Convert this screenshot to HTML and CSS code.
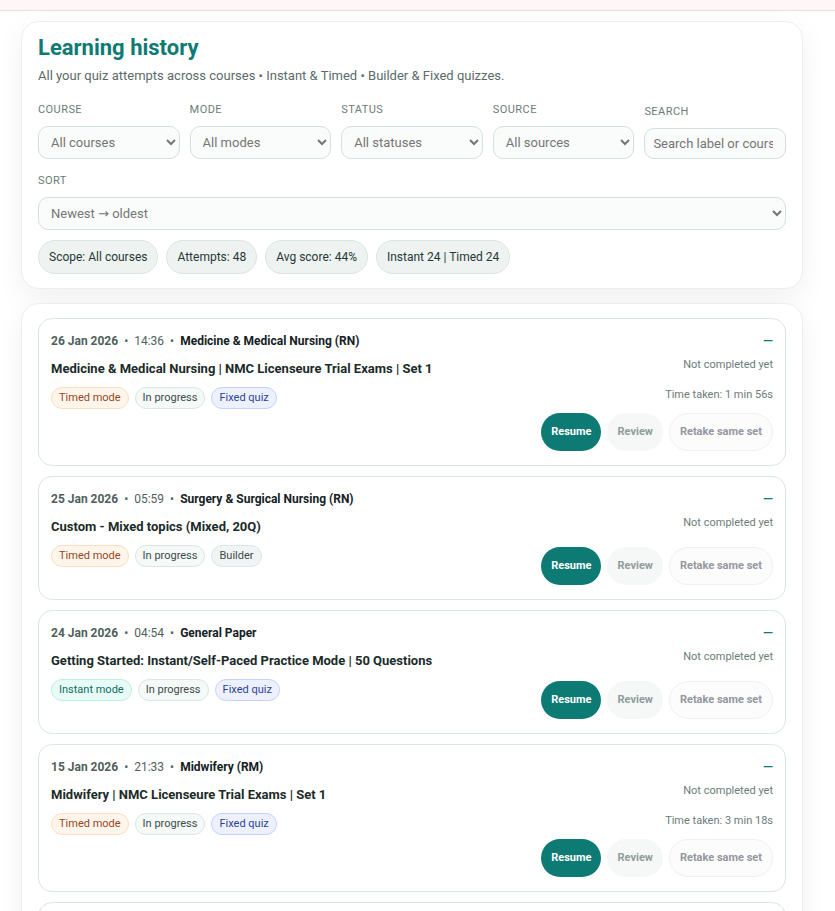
FILE: index.html
```
<!DOCTYPE html>
<html lang="en">
<head>
    <meta charset="UTF-8">
    <meta name="viewport" content="width=device-width, initial-scale=1.0">
    <title>Learning history</title>
    <link rel="stylesheet" href="styles.css">
</head>
<body>
    <div class="notice"></div>
    <main class="page">
        <section class="card">
            <h1>Learning history</h1>
            <p class="subtitle">All your quiz attempts across courses • Instant &amp; Timed • Builder &amp; Fixed quizzes.</p>
            <form class="filters">
                <div class="field">
                    <label for="course">Course</label>
                    <select id="course"><option>All courses</option></select>
                </div>
                <div class="field">
                    <label for="mode">Mode</label>
                    <select id="mode"><option>All modes</option></select>
                </div>
                <div class="field">
                    <label for="status">Status</label>
                    <select id="status"><option>All statuses</option></select>
                </div>
                <div class="field">
                    <label for="source">Source</label>
                    <select id="source"><option>All sources</option></select>
                </div>
                <div class="field">
                    <label for="search">Search</label>
                    <input type="text" id="search" placeholder="Search label or course">
                </div>
                <div class="field wide">
                    <label for="sort">Sort</label>
                    <select id="sort"><option>Newest → oldest</option></select>
                </div>
            </form>
            <div class="chips">
                <span class="chip">Scope: All courses</span>
                <span class="chip">Attempts: 48</span>
                <span class="chip">Avg score: 44%</span>
                <span class="chip">Instant 24 | Timed 24</span>
            </div>
        </section>

        <section class="card list">
            <article class="attempt">
                <div class="info">
                    <div class="meta"><strong>26 Jan 2026</strong><span>•</span><span>14:36</span><span>•</span><b>Medicine &amp; Medical Nursing (RN)</b></div>
                    <h2>Medicine &amp; Medical Nursing | NMC Licenseure Trial Exams | Set 1</h2>
                    <div class="tags"><span class="tag timed">Timed mode</span><span class="tag">In progress</span><span class="tag fixed">Fixed quiz</span></div>
                </div>
                <div class="result">
                    <div class="score">—</div>
                    <div class="note">Not completed yet</div>
                    <div class="time">Time taken: 1 min 56s</div>
                    <div class="actions">
                        <button type="button" class="btn resume">Resume</button>
                        <button type="button" class="btn review" disabled>Review</button>
                        <button type="button" class="btn retake" disabled>Retake same set</button>
                    </div>
                </div>
            </article>

            <article class="attempt">
                <div class="info">
                    <div class="meta"><strong>25 Jan 2026</strong><span>•</span><span>05:59</span><span>•</span><b>Surgery &amp; Surgical Nursing (RN)</b></div>
                    <h2>Custom - Mixed topics (Mixed, 20Q)</h2>
                    <div class="tags"><span class="tag timed">Timed mode</span><span class="tag">In progress</span><span class="tag builder">Builder</span></div>
                </div>
                <div class="result">
                    <div class="score">—</div>
                    <div class="note">Not completed yet</div>
                    <div class="actions">
                        <button type="button" class="btn resume">Resume</button>
                        <button type="button" class="btn review" disabled>Review</button>
                        <button type="button" class="btn retake" disabled>Retake same set</button>
                    </div>
                </div>
            </article>

            <article class="attempt">
                <div class="info">
                    <div class="meta"><strong>24 Jan 2026</strong><span>•</span><span>04:54</span><span>•</span><b>General Paper</b></div>
                    <h2>Getting Started: Instant/Self-Paced Practice Mode | 50 Questions</h2>
                    <div class="tags"><span class="tag instant">Instant mode</span><span class="tag">In progress</span><span class="tag fixed">Fixed quiz</span></div>
                </div>
                <div class="result">
                    <div class="score">—</div>
                    <div class="note">Not completed yet</div>
                    <div class="actions">
                        <button type="button" class="btn resume">Resume</button>
                        <button type="button" class="btn review" disabled>Review</button>
                        <button type="button" class="btn retake" disabled>Retake same set</button>
                    </div>
                </div>
            </article>

            <article class="attempt">
                <div class="info">
                    <div class="meta"><strong>15 Jan 2026</strong><span>•</span><span>21:33</span><span>•</span><b>Midwifery (RM)</b></div>
                    <h2>Midwifery | NMC Licenseure Trial Exams | Set 1</h2>
                    <div class="tags"><span class="tag timed">Timed mode</span><span class="tag">In progress</span><span class="tag fixed">Fixed quiz</span></div>
                </div>
                <div class="result">
                    <div class="score">—</div>
                    <div class="note">Not completed yet</div>
                    <div class="time">Time taken: 3 min 18s</div>
                    <div class="actions">
                        <button type="button" class="btn resume">Resume</button>
                        <button type="button" class="btn review" disabled>Review</button>
                        <button type="button" class="btn retake" disabled>Retake same set</button>
                    </div>
                </div>
            </article>

            <article class="attempt"></article>
        </section>
    </main>
</body>
</html>
```
FILE: styles.css
```
* {
    box-sizing: border-box;
}
body {
    margin: 0;
    background-color: white;
    color: #263836;
    font-family: Roboto, "Noto Sans", "DejaVu Sans", sans-serif;
    font-size: 13px;
}
.notice {
    height: 11px;
    background-color: #fff7f7;
    border-bottom: 1px solid #f3dcdf;
}
.page {
    display: grid;
    gap: 14px;
    padding: 10px 32px 0 21px;
}
.card {
    padding: 14px 16px;
    background-color: white;
    border: 1px solid #eeeeee;
    border-radius: 18px;
    box-shadow: 0 10px 30px rgba(0, 0, 0, 0.06);
}
h1 {
    margin: 0 0 6px;
    color: #0d7a73;
    font-size: 22px;
    line-height: 24px;
}
.subtitle {
    margin: 0 0 14px;
    color: #5b6b69;
    line-height: 20px;
}
.filters {
    display: grid;
    grid-template-columns: repeat(5, minmax(0, 1fr));
    gap: 12px 10px;
    align-items: end;
}
.field {
    display: grid;
    gap: 6px;
}
.field label {
    color: #6b7c79;
    font-size: 11px;
    line-height: 20px;
    letter-spacing: 0.04em;
    text-transform: uppercase;
}
.field select,
.field input {
    width: 100%;
    padding: 7px 12px 8px 8px;
    border: 1px solid #d3e0dd;
    border-radius: 10px;
    background-color: #fafcfb;
    color: #757575;
    font-family: inherit;
    font-size: 13px;
}
.field select {
    height: 33px;
    padding-right: 2px;
}
.field input {
    height: 31px;
}
.wide {
    grid-column: 1 / -1;
}
.chips {
    display: flex;
    flex-wrap: wrap;
    gap: 8px;
    margin-top: 10px;
}
.chip {
    padding: 6px 10px;
    border: 1px solid #dbe5e3;
    border-radius: 17px;
    background-color: #eef2f1;
    font-size: 12px;
    line-height: 20px;
}
.list {
    display: grid;
    gap: 10px;
}
.attempt {
    display: flex;
    justify-content: space-between;
    min-height: 124px;
    padding: 12px;
    border: 1px solid #dbe7e4;
    border-radius: 14px;
}
.meta {
    display: flex;
    gap: 6px;
    color: #4f5f5d;
    font-size: 12px;
    line-height: 20px;
}
.meta b {
    color: #14211f;
}
h2 {
    margin: 7px 0;
    color: #1b2b29;
    font-size: 13px;
    line-height: 22px;
}
.tags {
    display: flex;
    gap: 6px;
}
.tag {
    padding: 0 7px;
    border: 1px solid #dbe7e4;
    border-radius: 11px;
    background-color: #f5f9f8;
    color: #3c4c4a;
    font-size: 11px;
    line-height: 20px;
}
.timed {
    background-color: #fff5eb;
    border-color: #fddfbf;
    color: #95481b;
}
.instant {
    background-color: #e8fcf7;
    border-color: #bdeee2;
    color: #0d6e64;
}
.fixed {
    background-color: #edf1ff;
    border-color: #c5d2fc;
    color: #2c4390;
}
.builder {
    background-color: #f1f4f4;
}
.result {
    color: #6b7c79;
    font-size: 11px;
    line-height: 18px;
    text-align: right;
}
.score {
    color: #0d7a73;
    font-size: 13px;
    font-weight: bold;
    line-height: 20px;
}
.note {
    margin: 5px 0 12px;
}
.actions {
    display: flex;
    justify-content: flex-end;
    gap: 6px;
    margin: 9px 0 2px;
}
.note + .actions {
    margin-top: 15px;
}
.btn {
    height: 38px;
    padding: 0 10px 2px;
    border: none;
    border-radius: 19px;
    font-family: inherit;
    font-size: 11px;
    font-weight: bold;
}
.resume {
    background-color: #0d7a73;
    color: white;
}
.review {
    background-color: #f5f8f7;
    color: #8f9c9a;
}
.retake {
    border: 1px solid #f0f0f1;
    background-color: #fcfcfc;
    color: #93979f;
}
```
